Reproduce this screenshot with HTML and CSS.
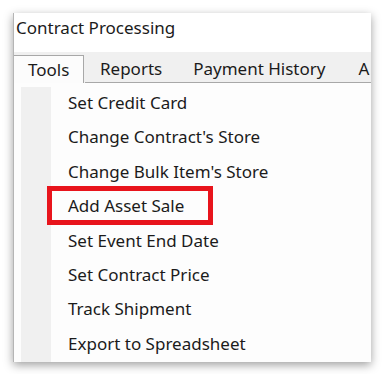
FILE: index.html
```html
<!DOCTYPE html>
<html>
<head>
<meta charset="utf-8">
<link rel="stylesheet" href="styles.css">
</head>
<body>
<div class="window">
  <div class="titlebar">Contract Processing</div>
  <div class="menubar">
    <div class="tab active">Tools</div>
    <div class="tab t-reports">Reports</div>
    <div class="tab t-payment">Payment History</div>
    <div class="tab t-a">A</div>
    <div class="rule"></div>
  </div>
  <div class="content">
    <div class="strip"></div>
    <ul class="items">
      <li>Set Credit Card</li>
      <li>Change Contract's Store</li>
      <li>Change Bulk Item's Store</li>
      <li class="highlight">Add Asset Sale<span class="redbox"></span></li>
      <li>Set Event End Date</li>
      <li>Set Contract Price</li>
      <li>Track Shipment</li>
      <li>Export to Spreadsheet</li>
    </ul>
  </div>
</div>
</body>
</html>
```

FILE: styles.css
```css
html, body {
  margin: 0;
  padding: 0;
  background: #ffffff;
}
body {
  padding: 13px;
  font-family: "Noto Sans", "Open Sans", sans-serif;
  color: #1b1b1b;
}
.window {
  width: 358px;
  height: 349px;
  box-sizing: border-box;
  background: #ffffff;
  border-left: 1px solid #b5b5b5;
  box-shadow: 0 3px 9px rgba(0, 0, 0, 0.38);
  overflow: hidden;
  display: flex;
  flex-direction: column;
}
.titlebar {
  height: 39px;
  box-sizing: border-box;
  padding-left: 2px;
  padding-top: 3px;
  font-size: 17px;
  line-height: 24px;
}
.menubar {
  height: 31px;
  background: #f0f0f0;
  display: flex;
  align-items: flex-end;
  position: relative;
}
.rule {
  position: absolute;
  left: 71px;
  right: 0;
  bottom: 0;
  height: 1px;
  background: #a8a8a8;
}
.tab {
  font-size: 17px;
  line-height: 24px;
  height: 28px;
  box-sizing: border-box;
  padding-top: 2px;
  white-space: nowrap;
}
.tab.active {
  width: 71px;
  flex: none;
  margin-left: -1px;
  border: 1px solid #a8a8a8;
  border-bottom: none;
  background: #fcfcfc;
  padding-left: 14px;
}
.t-reports { margin-left: 16px; }
.t-payment { margin-left: 31px; }
.t-a { margin-left: 33px; }
.content {
  flex: 1;
  display: flex;
  background: #fdfdfd;
}
.strip {
  width: 30px;
  margin-left: 7px;
  margin-top: 4px;
  background: #f0f0f0;
}
.items {
  list-style: none;
  margin: 0;
  padding: 3px 0 0 17px;
  flex: 1;
}
.items li {
  font-size: 17px;
  height: 34.4px;
  line-height: 34.4px;
  position: relative;
  white-space: nowrap;
}
.redbox {
  position: absolute;
  left: -21px;
  top: -3px;
  width: 166px;
  height: 39px;
  box-sizing: border-box;
  border: 5px solid #e8141c;
}
```
